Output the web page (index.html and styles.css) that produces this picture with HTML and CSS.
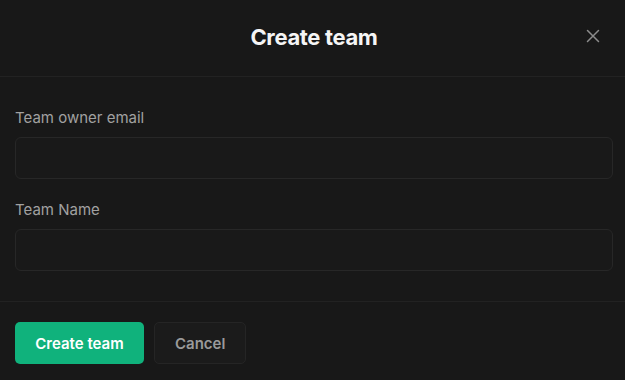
FILE: index.html
```html
<!DOCTYPE html>
<html lang="en">
<head>
  <meta charset="UTF-8">
  <meta name="viewport" content="width=device-width, initial-scale=1.0">
  <title>Create team</title>
  <link rel="stylesheet" href="styles.css">
</head>
<body>
  <div class="modal">
    <div class="modal-header">
      <h2>Create team</h2>
      <button class="close-btn" aria-label="Close">
        <svg width="14" height="14" viewBox="0 0 14 14" fill="none" stroke="currentColor" stroke-width="1.5" stroke-linecap="round">
          <path d="M1.5 1.5l11 11M12.5 1.5l-11 11"/>
        </svg>
      </button>
    </div>

    <form class="modal-body">
      <div class="field">
        <label for="owner">Team owner email</label>
        <input id="owner" type="email">
      </div>
      <div class="field">
        <label for="name">Team Name</label>
        <input id="name" type="text">
      </div>
    </form>

    <div class="modal-footer">
      <button class="btn btn-primary">Create team</button>
      <button class="btn btn-secondary">Cancel</button>
    </div>
  </div>
</body>
</html>
```

FILE: styles.css
```css
* {
  margin: 0;
  padding: 0;
  box-sizing: border-box;
}

body {
  font-family: Inter, 'Noto Sans', sans-serif;
  background: #181818;
  color: #ededed;
  min-height: 100vh;
}

.modal {
  width: 100%;
}

.modal-header {
  height: 77px;
  border-bottom: 1px solid #222222;
  display: flex;
  align-items: center;
  justify-content: center;
  position: relative;
  padding-bottom: 3px;
}

.modal-header h2 {
  font-size: 22px;
  font-weight: 700;
  color: #f5f5f5;
  letter-spacing: -0.35px;
  margin-left: 3px;
}

.close-btn {
  position: absolute;
  right: 25px;
  top: 29px;
  background: none;
  border: none;
  color: #8c8c8c;
  cursor: pointer;
  display: flex;
}

.modal-body {
  padding: 30px 12px 30px 15px;
  display: flex;
  flex-direction: column;
  gap: 20px;
  border-bottom: 1px solid #222222;
}

.field label {
  display: block;
  font-size: 15px;
  line-height: 22px;
  color: #a1a1a1;
  margin-bottom: 8px;
}

.field input {
  display: block;
  width: 100%;
  height: 42px;
  background: #191919;
  border: 1px solid #272727;
  border-radius: 6px;
  color: #ededed;
  font: inherit;
  padding: 0 12px;
  outline: none;
}

.modal-footer {
  padding: 20px 15px;
  display: flex;
  gap: 10px;
}

.btn {
  height: 42px;
  padding: 0 20px;
  border-radius: 5px;
  font-family: inherit;
  font-size: 15px;
  font-weight: 600;
  cursor: pointer;
}

.btn-primary {
  background: #10b27c;
  color: #ffffff;
  border: none;
  width: 129px;
}

.btn-secondary {
  background: #1b1b1b;
  color: #9a9a9a;
  border: 1px solid #252525;
  width: 92px;
}
```
